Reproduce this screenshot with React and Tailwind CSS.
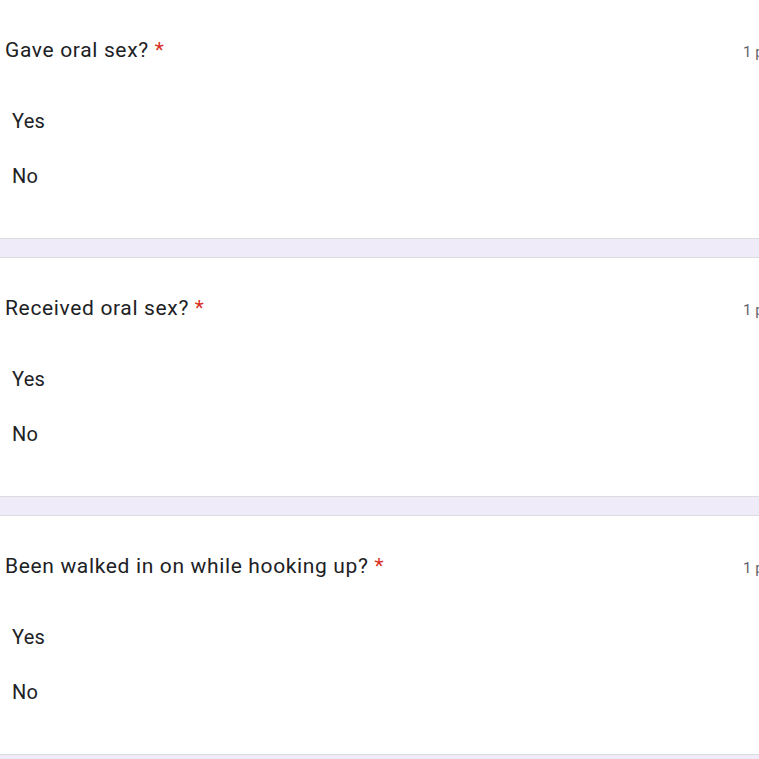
import React from 'react';

const questions = [
  'Gave oral sex?',
  'Received oral sex?',
  'Been walked in on while hooking up?',
];

function Question({ title }) {
  return (
    <div className="h-[238px] bg-white">
      <div className="flex items-baseline pt-[38px] pl-[5px]">
        <span className="text-[21px] leading-6 tracking-[0.65px] text-[#202124]">
          {title} <span className="text-[#d93025]">*</span>
        </span>
        <span className="ml-auto w-[16px] shrink-0 whitespace-nowrap text-[15px] leading-6 text-[#5f6368]">
          1 point
        </span>
      </div>
      <div className="pl-[12px] text-[20px] leading-6 tracking-[0.3px] text-[#202124]">
        <div className="mt-[45px]">Yes</div>
        <div className="mt-[31px]">No</div>
      </div>
    </div>
  );
}

export default function App() {
  return (
    <div className="w-full overflow-hidden bg-white font-['Roboto',sans-serif]">
      {questions.map((q) => (
        <div key={q}>
          <Question title={q} />
          <div className="h-[20px] border-y border-[#dadce0] bg-[#f0ebf8]" />
        </div>
      ))}
    </div>
  );
}
